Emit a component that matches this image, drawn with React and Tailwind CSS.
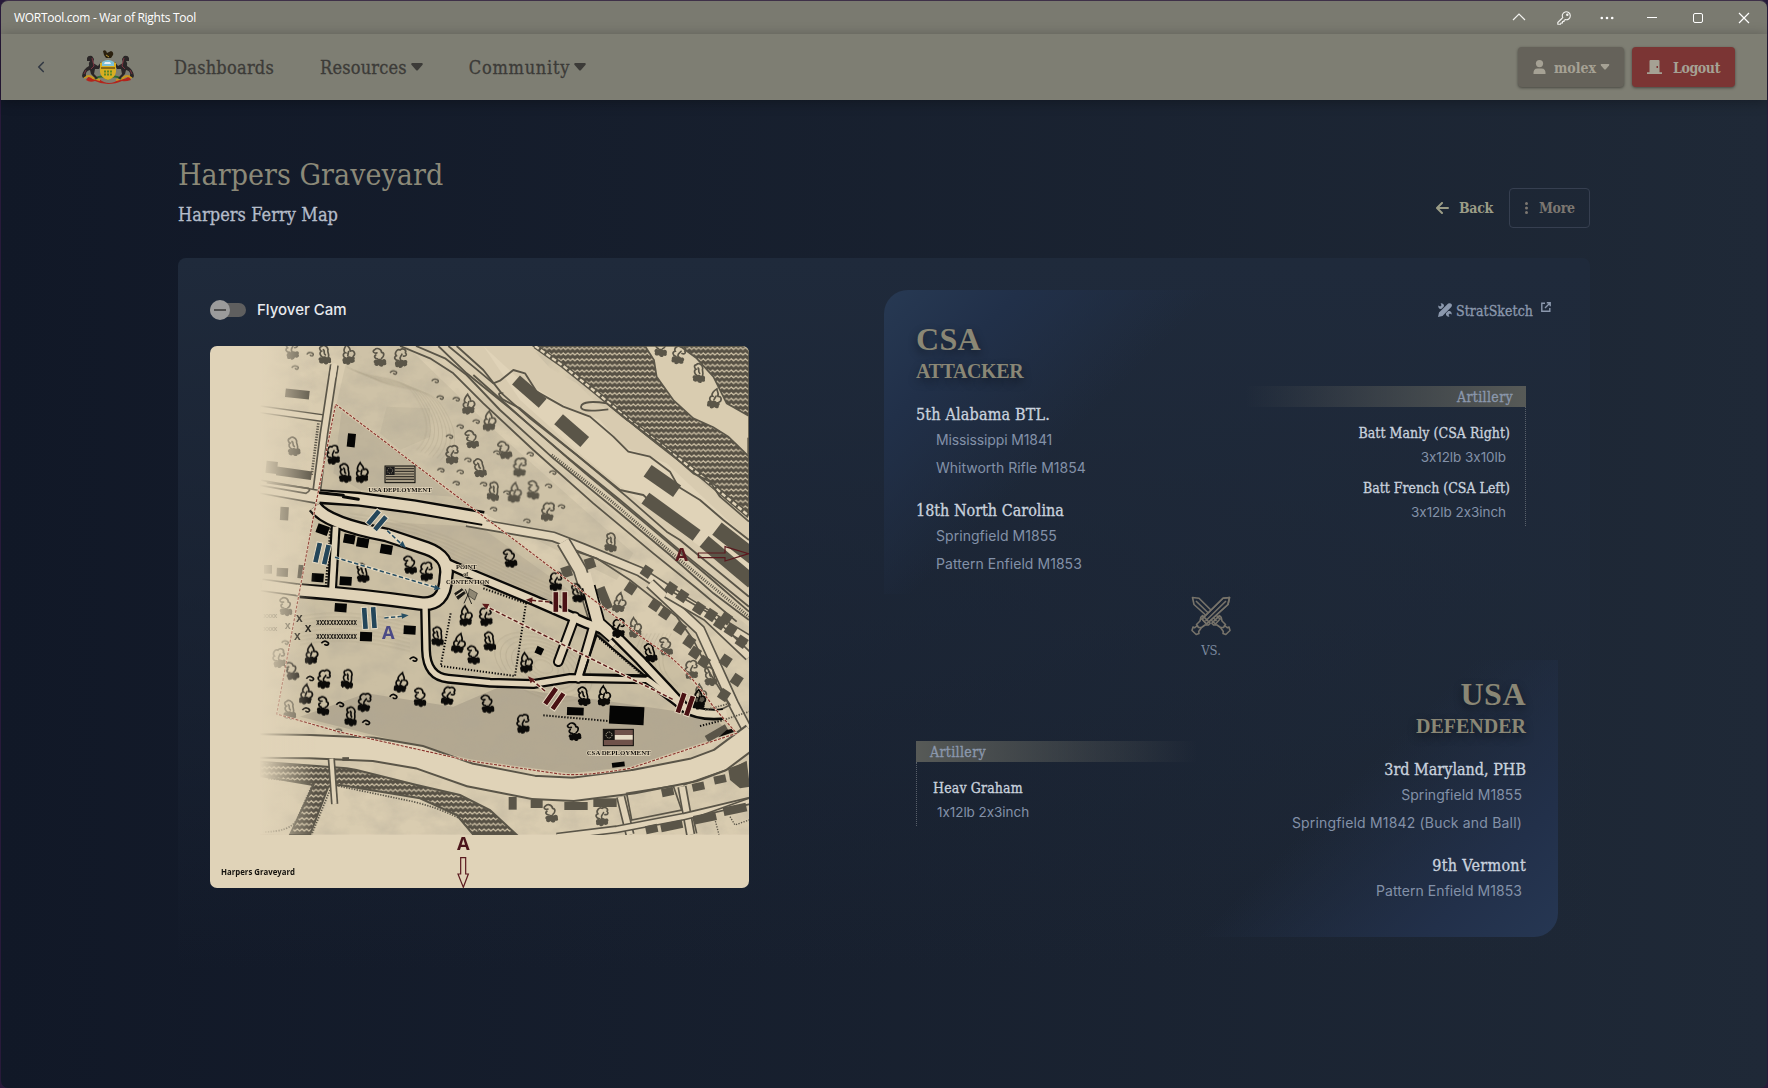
import React from "react";
import { ChevronLeft } from "lucide-react";

const slab = "font-['DejaVu_Serif_Condensed','DejaVu_Serif',serif] [font-stretch:condensed] whitespace-nowrap";
const slabMd = slab + " [-webkit-text-stroke:0.3px_currentColor]";
const sans = "font-['Inter',sans-serif] [font-feature-settings:'calt'_0] whitespace-nowrap";
const serif = "font-['Liberation_Serif',serif] font-bold text-[#8a8775] [text-shadow:0_4px_10px_rgba(0,0,0,0.45)]";

const INK = "#0b0a08";
const GREY = "#5a5548";
const PAPER = "#e0d3b8";

/* ---------- map ---------- */

const TREES = [
  "M-8 6C-20 4 -22 -6 -13 -9C-20 -18 -8 -30 0 -25C8 -32 20 -24 15 -15C20 -10 16 -4 8 -6M-2 4C-6 -4 2 -6 4 -12",
  "M-11 8C-17 0 -8 -8 -12 -16C-10 -28 2 -32 7 -26C17 -24 12 -14 8 -12C16 -8 12 2 6 6M-3 0C4 -6 -4 -12 2 -16",
  "M-9 8C-18 4 -16 -8 -8 -8C-16 -14 -6 -26 0 -32C2 -24 12 -18 6 -10C18 -16 24 0 14 6M-2 2L2 -10",
  "M-6 4C-14 0 -18 -12 -8 -14C-8 -26 6 -30 12 -24C22 -20 14 -12 6 -14M10 -8C18 -4 12 4 6 4",
];
const BLOB = "M-19 18C-22 8 -14 4 -8 8C-2 2 4 4 8 7C16 3 21 12 16 16C20 24 8 28 4 23C0 31 -10 30 -10 24C-16 27 -21 23 -19 18Z";

function Tree({ x, y, c = INK, i = 0 }) {
  const flip = i % 2 ? -1 : 1;
  const tilt = ((i * 37) % 24) - 10;
  return (
    <g transform={`translate(${x} ${y}) scale(${flip} 1) rotate(${tilt})`}>
      <path d={TREES[i % 4]} fill="none" stroke={c} strokeWidth="5" strokeLinecap="round" />
      <path d={BLOB} fill={c} />
    </g>
  );
}

function Block({ x, y, w, h, r = 0, c = GREY }) {
  return <rect x={x - w / 2} y={y - h / 2} width={w} height={h} fill={c} transform={`rotate(${r} ${x} ${y})`} />;
}

function Road({ d, w = 34, c = GREY, e = 6 }) {
  return (
    <>
      <path d={d} fill="none" stroke={c} strokeWidth={w + e * 2} strokeLinejoin="round" />
      <path d={d} fill="none" stroke={PAPER} strokeWidth={w} strokeLinejoin="round" />
    </>
  );
}

function Battery({ x, y, r, c, h = 58 }) {
  return (
    <g transform={`translate(${x} ${y}) rotate(${r})`} fill={c} stroke="#e8dcc4" strokeWidth="3">
      <rect x="-22" y={-h / 2} width="17" height={h} />
      <rect x="5" y={-h / 2} width="17" height={h} />
    </g>
  );
}

const GREY_TREES = [
  [277, 30], [373, 45], [445, 45], [538, 52], [603, 55], [280, 320], [805, 195], [815, 298], [757, 345], [838, 385],
  [868, 245], [914, 330], [960, 382], [880, 455], [944, 460], [1000, 450], [1044, 516], [1232, 608], [1258, 790],
  [1382, 22], [1437, 45], [1496, 100], [1544, 178], [257, 800], [238, 955], [268, 1110],
  [1305, 865], [1398, 920], [1475, 990], [1530, 1010], [1500, 1065], [1052, 1420], [1207, 1430],
];
const INK_TREES = [
  [400, 345], [434, 400], [485, 400], [630, 675], [680, 695], [487, 700], [797, 830], [930, 655], [1068, 725], [1132, 760],
  [334, 945], [275, 993], [373, 1018], [442, 1018], [318, 1065], [370, 1098], [494, 1088], [452, 1130], [603, 1030], [660, 1072], [745, 1068],
  [712, 890], [776, 912], [820, 945], [858, 830], [868, 905], [978, 970], [862, 1092], [970, 1152], [1150, 1070], [1212, 1070], [1122, 1175],
  [1256, 865], [1350, 940], [1497, 1080],
];
const TUFTS = [[330, 45], [285, 85], [580, 100], [705, 125], [720, 175], [768, 180], [780, 262], [748, 292], [803, 362], [722, 393], [780, 398], [768, 432], [828, 247], [890, 340], [990, 345], [1058, 400], [850, 435], [920, 460], [1045, 440], [1084, 502], [980, 545], [880, 510], [255, 910], [415, 1175]];

function Wave({ id, bg }) {
  return (
    <pattern id={id} width="28" height="17" patternUnits="userSpaceOnUse">
      <rect width="28" height="17" fill={bg} />
      <path d="M-2 6L5 11L12 5L19 11L26 5L30 8" stroke="#d3c6aa" strokeWidth="3.6" fill="none" />
    </pattern>
  );
}

function BattleMap() {
  return (
    <svg viewBox="30 18 1617 1626" className="block h-[542px] w-[539px] rounded-[7px]" preserveAspectRatio="none">
      <defs>
        <Wave id="wave" bg="#575145" />
        <linearGradient id="fade" x1="0" x2="1" y1="0" y2="0">
          <stop offset="0" stopColor={PAPER} />
          <stop offset="1" stopColor={PAPER} stopOpacity="0" />
        </linearGradient>
        <filter id="mottle" x="0" y="0" width="100%" height="100%">
          <feTurbulence type="fractalNoise" baseFrequency="0.013 0.018" numOctaves="4" seed="8" />
          <feColorMatrix values="0 0 0 0 0.42  0 0 0 0 0.38  0 0 0 0 0.3  1.9 0 0 0 -0.72" />
        </filter>
        <clipPath id="land"><rect x="180" y="18" width="1467" height="1466" /></clipPath>
      </defs>
      <rect x="30" y="18" width="1617" height="1626" fill={PAPER} />
      <g clipPath="url(#land)">
        <rect x="180" y="18" width="1467" height="1466" fill="#d9ccb0" />
        <path d="M450 18L620 18L860 250L1300 640L1250 720L810 500L410 190Z" fill="#cec2a7" />
        <path d="M407 193L1260 840L1410 950L1610 1180L1290 1285L1110 1303L810 1263L230 1122Z" fill="#cbbfa3" />
        <path d="M300 1130L500 1060L760 1100L900 1040L1200 1080L1540 1130L1590 1180L1290 1280L1110 1300L810 1258Z" fill="#b3a891" />
        <path d="M425 215L640 370L760 470L480 450L400 400Z" fill="#bfb49b" />
        <path d="M560 200L690 205L690 290L600 330L540 280Z" fill="#c6bba1" />
        <path d="M420 540L840 560L1120 760L1060 800L760 680Z" fill="#c0b49a" />
        <rect x="180" y="18" width="1467" height="1466" filter="url(#mottle)" opacity="0.36" />
        <g fill="none" stroke="#8d836c" strokeWidth="1.3" opacity="0.4">
          {[0, 1, 2, 3, 4, 5, 6, 7].map((k) => (
            <g key={k}>
              <path d={`M${440 + k * 12} ${80 + k * 5}c60 40 160 20 200 80s60 120 10 170`} />
              <path d={`M450 ${520 + k * 11}q200 20 380 110t260 120`} />
              <ellipse cx="1030" cy="980" rx={30 + k * 18} ry={18 + k * 10} transform="rotate(25 1030 980)" />
              <path d={`M300 ${830 + k * 12}q140 -30 330 20`} />
              <path d={`M${1330 + k * 12} 880q-60 100 20 160`} />
            </g>
          ))}
        </g>

        {/* north-east river and islands */}
        <path d="M1000 18L1647 18L1647 520L1500 400L1300 250L1180 150L1090 80Z" fill="url(#wave)" stroke={GREY} strokeWidth="5" />
        <path d="M1335 18L1440 18L1490 55L1540 110L1580 190L1647 228L1647 350L1585 290L1540 262L1480 235L1420 180L1370 110L1362 60Z" fill="#d9ccb0" stroke={GREY} strokeWidth="5" />
        <path d="M1005 18L1090 78L1180 150L1300 250L1500 405L1647 528" fill="none" stroke={GREY} strokeWidth="15" />
        <path d="M1005 18L1090 78L1180 150L1300 250L1500 405L1647 528" fill="none" stroke={PAPER} strokeWidth="7" strokeDasharray="14 7" />
        <path d="M990 18L1050 85L1130 130L1190 190L1220 205L1290 250L1400 340L1480 400L1540 460L1647 545L1647 860L1500 740L1300 570L1060 360L910 220L700 18Z" fill="#d8cbb0" />
        <path d="M850 18L950 110L1100 200L1200 240L1270 320L1400 370L1647 600L1647 740L1500 620L1300 470L1150 350L960 180Z" fill={PAPER} />
        <g fill="none" stroke={GREY} strokeWidth="5.5" strokeLinejoin="round">
          <path d="M600 18L690 55L760 100L850 190L1000 330L1180 490L1360 640L1490 745L1610 845" />
          <path d="M648 18L735 55L800 105L900 210L1060 355L1230 495L1410 645L1540 760L1647 840" />
          <path d="M715 18L800 100L930 205L1100 350L1260 480L1450 640L1647 800" />
          <path d="M745 18L830 88L880 130L900 122L940 90L975 100L1010 155L1090 200L1170 230L1240 290L1285 335L1350 350L1410 395L1435 440L1500 480L1570 540L1647 600" />
          <path d="M770 18L850 90L905 160L990 235L1130 345L1280 470L1400 575L1440 600L1647 770" />
          <path d="M910 160Q885 155 908 178L960 205L1100 320L1260 450L1330 465L1400 530" />
          <path d="M1225 208Q1130 220 1145 195Q1160 180 1220 190L1290 245L1400 330L1480 400L1530 425L1560 470L1647 545" />
          <path d="M820 105L1000 265L1150 395L1330 545L1520 705L1647 815" />
        </g>
        <path d="M1055 345L1230 480L1440 660L1647 830" fill="none" stroke={GREY} strokeWidth="9" strokeDasharray="3 4" />
        <Block x={988} y={155} w={106} h={36} r={41} />
        <Block x={1115} y={272} w={104} h={40} r={41} />
        <Block x={1387} y={423} w={108} h={42} r={35} />
        <Block x={1413} y={530} w={190} h={40} r={36} />
        <Block x={1610} y={612} w={150} h={46} r={38} />
        <Block x={1585} y={665} w={190} h={42} r={40} />
        <Block x={1652} y={318} w={20} h={50} />

        {/* outlying streets */}
        <Road d="M180 208L380 236" w={16} e={4} />
        <Road d="M403 75L372 280L348 470" w={17} e={5} />
        <path d="M403 78L398 110" stroke={PAPER} strokeWidth="17" strokeLinecap="round" />
        <Road d="M180 440L350 470" w={34} e={5} />
        <path d="M180 436L318 460Q335 450 325 445L200 428" fill="none" stroke={GREY} strokeWidth="5" />
        <Road d="M185 735L310 752" w={30} e={5} />
        <Road d="M800 545L1060 590L1150 625L1320 695L1450 780L1647 900" w={22} e={5} />
        <Road d="M1090 605L1140 690L1190 850L1250 910" w={34} e={5} />
        <Road d="M1350 730L1500 870L1600 1090L1647 1180" w={24} e={5} />
        <Road d="M1400 760L1520 830L1647 950" w={20} e={5} />
        <path d="M1130 635L1190 655L1290 720L1430 830L1480 900L1530 1000L1590 1095L1560 1110" fill="none" stroke={GREY} strokeWidth="5" />
        {[[1100, 695], [1170, 670], [1340, 695], [1292, 745], [1413, 745], [1447, 768], [1365, 795], [1395, 820], [1497, 805], [1533, 825], [1578, 835], [1440, 865], [1468, 905], [1485, 938], [1512, 965], [1577, 962], [1610, 1020], [1572, 1065], [1560, 850], [1592, 870], [1625, 905]].map(([x, y], k) => (
          <Block key={k} x={x} y={y} w={30} h={32} r={k < 2 ? -18 : 34} />
        ))}
        <Block x={1213} y={775} w={28} h={68} r={-22} />
        <Block x={1550} y={1180} w={70} h={22} r={-30} />

        {/* south road */}
        <path d="M180 1218L330 1220L520 1228L660 1252L810 1305L1000 1342L1120 1348L1300 1325L1480 1290L1560 1260L1660 1185" fill="none" stroke={GREY} strokeWidth="76" />
        <path d="M180 1218L330 1220L520 1228L660 1252L810 1305L1000 1342L1120 1348L1300 1325L1480 1290L1560 1260L1660 1185" fill="none" stroke={PAPER} strokeWidth="64" />
        <path d="M180 1265L440 1285L470 1290L650 1335L780 1365L870 1410L950 1484L820 1484L770 1425L660 1375L420 1335L385 1340L330 1484L270 1484L340 1335L180 1308Z" fill="url(#wave)" stroke={GREY} strokeWidth="6" />
        <path d="M205 1316L340 1328L290 1440Q270 1475 190 1476M415 1338L640 1385Q780 1420 850 1484M390 1350L335 1484" fill="none" stroke={GREY} strokeWidth="5" strokeDasharray="4 4" />
        <Road d="M394 1256L404 1392" w={12} e={5} />
        <Block x={437} y={1257} w={20} h={11} />
        <Road d="M1262 1370L1290 1484M1446 1340L1472 1484" w={18} e={5} />
        <Road d="M1070 1490L1250 1468L1450 1430L1660 1380" w={14} e={5} />
        <path d="M1280 1360L1420 1338L1445 1410L1295 1440ZM1450 1335L1640 1268M1490 1480L1480 1435L1647 1375" fill="none" stroke={GREY} strokeWidth="5" />
        {[[938, 1390, 24, 38], [1010, 1392, 36, 24], [1128, 1398, 70, 24], [1215, 1388, 70, 26], [1403, 1356, 36, 24], [1495, 1340, 36, 24], [1560, 1318, 36, 24], [1355, 1467, 36, 24], [1415, 1458, 66, 24], [1515, 1434, 68, 26], [1605, 1408, 70, 26]].map(([x, y, w, h], k) => (
          <Block key={k} x={x} y={y} w={w} h={h} r={k > 3 ? -12 : 0} />
        ))}
        <path d="M1585 1290L1640 1262L1650 1340L1620 1345L1590 1320Z" fill={GREY} />
        <path d="M1540 1420L1557 1484M1590 1430L1605 1455L1647 1440" fill="none" stroke={GREY} strokeWidth="4" strokeDasharray="4 4" />

        {/* west buildings */}
        <Block x={292} y={162} w={72} h={26} r={6} />
        <Block x={282} y={400} w={106} h={26} r={8} />
        <Block x={215} y={382} w={34} h={36} r={6} />
        <Block x={253} y={521} w={25} h={40} r={3} />
        <Block x={204} y={688} w={24} h={26} />
        <Block x={247} y={697} w={34} h={26} r={3} />
        <Block x={302} y={695} w={16} h={40} r={6} />
        <path d="M355 250L335 405" stroke={GREY} strokeWidth="8" strokeDasharray="4 4" />

        {/* central roads */}
        <g strokeLinejoin="round">
          <path d="M345 500Q380 550 560 585L680 625Q750 650 738 710Q735 800 660 790Q480 765 300 752" fill="none" stroke={INK} strokeWidth="45" />
          <path d="M360 470L480 478L640 500L850 535" fill="none" stroke={INK} strokeWidth="45" />
          <path d="M407 560L396 750" fill="none" stroke={INK} strokeWidth="30" />
          <path d="M740 670L820 705L1000 780L1160 850L1240 880L1320 960L1400 1045L1450 1100Q1500 1130 1570 1122" fill="none" stroke={INK} strokeWidth="35" />
          <path d="M675 790L678 930Q680 1010 745 1016L870 1028L1000 1032L1110 1014L1340 1018Q1400 1060 1450 1100" fill="none" stroke={INK} strokeWidth="30" />
          <path d="M1125 830L1075 965M1180 860L1135 1015" fill="none" stroke={INK} strokeWidth="32" strokeLinecap="round" />
          <path d="M1165 740L1195 850L1240 890" fill="none" stroke={INK} strokeWidth="44" />

          <path d="M345 500Q380 550 560 585L680 625Q750 650 738 710Q735 800 660 790Q480 765 290 750" fill="none" stroke={PAPER} strokeWidth="31" />
          <path d="M346 468L480 478L640 500L860 538" fill="none" stroke={PAPER} strokeWidth="31" />
          <path d="M407 560L396 750" fill="none" stroke={PAPER} strokeWidth="17" />
          <path d="M740 670L820 705L1000 780L1160 850L1240 880L1320 960L1400 1045L1450 1100Q1500 1130 1580 1120" fill="none" stroke={PAPER} strokeWidth="21" />
          <path d="M675 790L678 930Q680 1010 745 1016L870 1028L1000 1032L1110 1014L1340 1018Q1400 1060 1450 1100" fill="none" stroke={PAPER} strokeWidth="16" />
          <path d="M1125 830L1075 965M1180 860L1135 1015" fill="none" stroke={PAPER} strokeWidth="20" strokeLinecap="round" />
          <path d="M1155 700L1195 850L1240 890" fill="none" stroke={PAPER} strokeWidth="33" />
          <path d="M360 458L430 466M430 470L475 478" fill="none" stroke={INK} strokeWidth="9" strokeLinecap="round" />
        </g>
        <path d="M1190 885L1338 1010L1150 1004Z" fill="none" stroke={INK} strokeWidth="6" strokeLinejoin="round" />
        <path d="M1198 895L1325 1003" fill="none" stroke={INK} strokeWidth="6" strokeDasharray="4 4" />
        <g fill="none" stroke={INK} strokeWidth="6" strokeDasharray="4 5">
          <path d="M752 820L722 978L945 1008L978 790L850 745" />
          <path d="M1030 1126L1225 1143M1500 1158L1570 1140" />
          <path d="M392 565L378 740" strokeWidth="8" />
        </g>
        <path d="M1515 1110L1590 1090M1570 1140L1647 1115" fill="none" stroke={GREY} strokeWidth="5" strokeDasharray="4 4" />

        {[[454, 301, 24, 40, 6], [368, 569, 36, 28, 20], [448, 597, 34, 28, 10], [488, 608, 36, 28, 10], [559, 628, 36, 28, 10], [353, 713, 36, 26, 4], [437, 723, 36, 26, 4], [422, 803, 36, 26, 4], [498, 890, 36, 28, 2], [629, 870, 36, 26, 3], [1018, 932, 22, 22, 25], [1126, 1114, 50, 24, 2], [1280, 1126, 104, 54, 3], [1255, 1274, 38, 14, -7]].map(([x, y, w, h, r], k) => (
          <Block key={k} x={x} y={y} w={w} h={h} r={r} c="#050504" />
        ))}
        <path d="M1555 1192L1580 1170L1598 1166L1602 1176Z" fill={INK} />
        {GREY_TREES.map(([x, y], k) => <Tree key={k} x={x} y={y} i={k} c={GREY} />)}
        {TUFTS.map(([x, y], k) => <path key={k} d={`M${x - 10} ${y - 2}q6 -8 14 -5q10 3 4 9q-6 2 -8 -3`} fill="none" stroke={GREY} strokeWidth="4" />)}
        {INK_TREES.map(([x, y], k) => <Tree key={k} x={x} y={y} i={k} />)}
        {[[375, 912], [640, 960], [330, 1018], [420, 1096], [580, 1072], [318, 1112], [498, 1150]].map(([x, y], k) => <path key={k} d={`M${x - 11} ${y - 2}q8 -10 16 -5q10 5 3 10q-8 2 -9 -3`} fill="none" stroke={INK} strokeWidth="5" />)}
        <g fontFamily="Liberation Sans" fontWeight="700" fill={INK}>
          <text x="349" y="856" fontSize="28" textLength="122" lengthAdjust="spacingAndGlyphs">xxxxxxxxxxxx</text>
          <text x="349" y="897" fontSize="28" textLength="122" lengthAdjust="spacingAndGlyphs">xxxxxxxxxxxx</text>
          <text x="288" y="845" fontSize="36">x</text>
          <text x="314" y="876" fontSize="36">x</text>
          <text x="282" y="899" fontSize="36">x</text>
          <text x="254" y="868" fontSize="32" fill={GREY}>x</text>
          <text x="190" y="834" fontSize="22" fill={GREY} textLength="42">xxxx</text>
          <text x="190" y="872" fontSize="22" fill={GREY} textLength="42">xxxx</text>
        </g>
        <path d="M407 193L1260 840L1330 895L1410 950Q1470 1000 1540 1100L1610 1180L1290 1285Q1150 1310 1080 1302L810 1263L415 1175L230 1122L290 800L348 490Z" fill="none" stroke="#e5d6bc" strokeWidth="5" />
        <path d="M407 193L1260 840L1330 895L1410 950Q1470 1000 1540 1100L1610 1180L1290 1285Q1150 1310 1080 1302L810 1263L415 1175L230 1122L290 800L348 490Z" fill="none" stroke="#8a352e" strokeWidth="3.4" strokeDasharray="9 4" />
        <rect x="178" y="18" width="170" height="1466" fill="url(#fade)" />
      </g>

      {/* troop movements */}
      <g fill="none" strokeWidth="4.500" strokeDasharray="13 7">
        <path d="M562 572L608 616M405 652L712 744M553 834L612 828" stroke="#e5d9c0" strokeWidth="9" strokeDasharray="none" />
        <path d="M562 572L608 616M405 652L712 744M553 834L612 828" stroke="#274e63" />
        <path d="M1048 786L985 780M1418 1078L850 795M1035 1053L990 1015" stroke="#e5d9c0" strokeWidth="9" strokeDasharray="none" />
        <path d="M1048 786L985 780M1418 1078L850 795M1035 1053L990 1015" stroke="#5e1c1c" />
      </g>
      <path d="M618 625L598 615L608 603ZM722 747L702 750L706 734ZM626 826L606 836L604 820Z" fill="#274e63" />
      <path d="M978 779L998 772L996 790ZM846 791L868 792L860 808ZM984 1009L1004 1018L992 1030Z" fill="#5e1c1c" />
      <Battery x={531} y={541} r={40} c="#24465a" h={54} />
      <Battery x={366} y={641} r={13} c="#24465a" h={62} />
      <Battery x={508} y={834} r={-4} c="#24465a" h={66} />
      <Battery x={1081} y={786} r={0} c="#4a1114" h={62} />
      <Battery x={1063} y={1076} r={35} c="#4a1114" h={60} />
      <Battery x={1456} y={1093} r={19} c="#4a1114" h={64} />

      {/* deployment flags */}
      <rect x="555" y="378" width="90" height="50" fill="#a89d85" stroke={INK} strokeWidth="3" />
      <path d="M584 386H642M584 394H642M584 402H642M558 410H642M558 418H642" stroke="#3a362e" strokeWidth="3.6" />
      <rect x="557" y="380" width="27" height="25" fill="#1c1b1b" />
      <circle cx="570" cy="392" r="8" fill="none" stroke="#8d8674" strokeWidth="3" strokeDasharray="3 3" />
      <rect x="1210" y="1168" width="90" height="49" fill="#6f524a" stroke={INK} strokeWidth="3" />
      <rect x="1243" y="1185" width="55" height="14" fill="#e6dcc6" />
      <rect x="1212" y="1170" width="32" height="30" fill="#15130f" />
      <circle cx="1227" cy="1185" r="9" fill="none" stroke="#d8ccb2" strokeWidth="3" strokeDasharray="3 3" />
      <g stroke={INK} strokeWidth="2.500">
        <path d="M796 748L815 792M806 760L792 790" />
        <path d="M764 760L786 746L796 760L774 778Z" fill="#1a1814" stroke="#1a1814" />
        <path d="M768 768L791 752" stroke="#d8ccb2" strokeWidth="4" />
        <path d="M808 746L832 760L824 780L804 766Z" fill="#8f8773" strokeWidth="1.500" />
      </g>
      <g fontFamily="Liberation Serif" fontWeight="700" fill="#16130e" stroke="#e0d3b8" strokeWidth="4" paintOrder="stroke" fontSize="19">
        <text x="505" y="455" textLength="190" lengthAdjust="spacingAndGlyphs">USA DEPLOYMENT</text>
        <text x="1160" y="1244" textLength="192" lengthAdjust="spacingAndGlyphs">CSA DEPLOYMENT</text>
        <text x="768" y="688" textLength="62" lengthAdjust="spacingAndGlyphs">POINT</text>
        <text x="790" y="709" fontSize="17">of</text>
        <text x="738" y="732" textLength="130" lengthAdjust="spacingAndGlyphs">CONTENTION</text>
      </g>

      {/* artillery arrows */}
      <g fill="none" stroke="#5b1a1f" strokeWidth="3.6">
        <path d="M1495 639H1575V620L1646 641L1575 663V653H1495Z" />
        <path d="M782 1553H797V1602H805L790 1642L774 1602H782Z" />
      </g>
      <g fontFamily="Open Sans" fontWeight="700">
        <text x="1426" y="664" fontSize="54" fill="#5b1a1f" textLength="38" lengthAdjust="spacingAndGlyphs">A</text>
        <text x="771" y="1529" fontSize="54" fill="#4b151b" textLength="38" lengthAdjust="spacingAndGlyphs">A</text>
        <text x="546" y="896" fontSize="54" fill="#4b4a86" textLength="38" lengthAdjust="spacingAndGlyphs">A</text>
        <text x="63" y="1606" fontSize="25" fill="#14120e" textLength="222" lengthAdjust="spacingAndGlyphs">Harpers Graveyard</text>
      </g>
    </svg>
  );
}

/* ---------- icons ---------- */

const Caret = ({ className }) => (
  <svg viewBox="0 0 12 8" className={className} fill="currentColor"><path d="M1 0H11Q12.4 .6 11.4 2L7 7Q6 8 5 7L.6 2Q-.4 .6 1 0Z" /></svg>
);

function Crest() {
  return (
    <svg viewBox="0 0 54 34" className="h-[34px] w-[54px]">
      <path d="M8 26Q12 30 18 29Q23 33 28 33Q34 33 38 29Q44 30 48 26L50 30Q44 32 41 31Q35 34 27 34Q20 34 14 31Q9 33 5 30Z" fill="#b3241c" />
      <path d="M3 28Q8 24 12 28L19 30M51 28Q46 24 42 28L35 30" stroke="#c9961f" strokeWidth="2" fill="none" />
      <path d="M14 29Q20 24 27 29Q34 24 40 29" stroke="#2f6b32" strokeWidth="2" fill="none" />
      {[0, 1].map((k) => (
        <g key={k} transform={k ? "matrix(-1 0 0 1 54 0)" : undefined}>
          <path d="M6 8Q7 5 11 6L13 9L12 13L17 16L20 12L21 13L18 19L14 19L13 24L17 28L15 29L10 24L9 20Q4 21 5 26L2 28L1 26Q2 19 8 16Q7 13 9 11L6 11Z" fill="#2a2627" />
          <path d="M11 8L13 16L10 19M5 20L3 24" stroke="#7a3440" strokeWidth="1" fill="none" />
        </g>
      ))}
      <path d="M19 13Q27 8 35 13V22Q34 28 27 30Q20 28 19 22Z" fill="#d9ae22" />
      <path d="M21 12Q27 8 33 12V16H21Z" fill="#7cc0d8" />
      <path d="M24 12H29L30 14H23Z" fill="#e9eef0" />
      <path d="M20 17H34V19H20Z" fill="#8a6a14" />
      <path d="M23 21.500H31M23 24.500H31" stroke="#5b8a26" strokeWidth="1.8" strokeDasharray="2 1" />
      <path d="M22 1Q25 -1 26 3L30 1Q33 2 32 5L30 8L25 8L23 5Z" fill="#2b2110" />
      <path d="M25 5L28 7" stroke="#b9952f" strokeWidth="1" />
    </svg>
  );
}

function Swords() {
  const sword = "M1.5 1.5L8 2.2L29 23L24.5 28L3 8.5ZM5 5L25.5 25M22.5 29L20.8 27.3L28.4 19.6L30.2 21.3L31 25L34.5 28.5L32.5 31.5L29.5 31.5L26 29ZM33 29L36.5 31.8L38 31L39 34.5L34.8 38.5L32 37.5L32.3 35.5L29.5 31.5";
  return (
    <svg viewBox="0 0 40 40" className="h-10 w-10" fill="none" stroke="#77736a" strokeWidth="1.6" strokeLinejoin="round">
      <path d={sword} />
      <g transform="matrix(-1 0 0 1 40 0)">
        <path d="M1.5 1.5L8 2.2L29 23L24.5 28L3 8.5Z" fill="#1d2635" />
        <path d={sword} />
      </g>
    </svg>
  );
}

function Button({ className, children }) {
  return <button className={`${slab} flex h-10 items-center rounded-[4px] text-[14px] leading-none ${className}`}>{children}</button>;
}

function TitleBar() {
  return (
    <div className="flex h-[34px] items-center justify-between rounded-t-[7px] border-t border-[#3e3048] bg-[#7a7a70] pl-[13px] pr-[17px] text-white">
      <span className="font-['Open_Sans',sans-serif] text-[12px] leading-none tracking-[-0.28px]">WORTool.com - War of Rights Tool</span>
      <div className="flex items-center">
        <svg className="mr-[31px] h-3 w-3.5" viewBox="0 0 14 12" fill="none" stroke="#f1f1ee" strokeWidth="1.2"><path d="M1 8L7 2L13 8" /></svg>
        <svg className="mr-[29px] h-3.5 w-3.5" viewBox="0 0 14 14" fill="none" stroke="#f1f1ee" strokeWidth="1.1" strokeLinejoin="round"><path d="M6 7A4 4 0 1 1 8.2 8.6L7 9.5V10.5H5.5V12H4L3.5 13.3H.8V11.5L5.4 7" /><circle cx="10.3" cy="3.7" r=".7" fill="#f1f1ee" /></svg>
        <svg className="mr-[33px] h-1 w-3.5" viewBox="0 0 14 4" fill="#fff"><circle cx="1.8" cy="2" r="1.3" /><circle cx="7" cy="2" r="1.3" /><circle cx="12.2" cy="2" r="1.3" /></svg>
        <span className="mr-[36px] h-px w-2.5 bg-white" />
        <span className="mr-[35px] size-2.5 rounded-[2px] border border-white" />
        <svg className="h-3 w-3" viewBox="0 0 12 12" fill="none" stroke="#fff" strokeWidth="1.2"><path d="M1 1L11 11M11 1L1 11" /></svg>
      </div>
    </div>
  );
}

function NavBar() {
  return (
    <nav className="flex h-[66px] items-center bg-[#7e7e73] pr-[32px] pl-[31px] text-[#3c3b38] shadow-[0_2px_12px_rgba(0,0,0,0.3)]">
      <ChevronLeft className="mr-[31px] size-[18px] text-[#333a44]" strokeWidth={2.2} />
      <Crest />
      <span className={`${slabMd} ml-[39px] text-[18px] tracking-[0.25px]`}>Dashboards</span>
      <span className={`${slabMd} ml-[46px] flex items-center text-[18px] tracking-[0.2px]`}>Resources<Caret className="ml-[4px] h-2 w-3" /></span>
      <span className={`${slabMd} ml-[46px] flex items-center text-[18px] tracking-[0.75px]`}>Community<Caret className="ml-[4px] h-2 w-3" /></span>
      <div className="ml-auto flex gap-2 font-bold text-[#a5a194]">
        <Button className="w-[106px] bg-[#65625a] pl-[15px] font-bold shadow-[0_1px_3px_rgba(0,0,0,0.45)]">
          <svg viewBox="0 0 13 14" className="mr-[8px] h-3.5 w-[13px]" fill="currentColor"><circle cx="6.5" cy="3.6" r="3.6" /><path d="M.5 14Q0 8.4 4.5 8.4H8.5Q13 8.4 12.5 14Z" /></svg>
          <span className="pt-0.5">molex</span><Caret className="ml-[4px] h-1.5 w-2.5" />
        </Button>
        <Button className="w-[103px] bg-[#7b3534] pl-[15px] font-bold tracking-[-0.4px] shadow-[0_1px_3px_rgba(0,0,0,0.45)]">
          <svg viewBox="0 0 15 14" className="mr-[11px] h-3.5 w-[15px]" fill="currentColor"><path d="M2.5 1Q2.5 0 3.5 0H11.5Q12.5 0 12.5 1V12.3H15V14H0V12.3H2.5ZM9.5 6V8H11V6Z" fillRule="evenodd" /></svg>
          <span className="pt-0.5">Logout</span>
        </Button>
      </div>
    </nav>
  );
}

function Unit({ name, nameClass = "", arms, right, first }) {
  return (
    <div className={right ? "text-right" : ""}>
      <div className={`${slabMd} h-6 pt-px text-[16px] leading-6 text-[#c9d2de] ${first ? "" : "mt-4"} ${nameClass}`}>{name}</div>
      {arms.map(([a, c]) => (
        <div key={a} className={`${sans} text-[14px] leading-7 text-[#8391a8] ${right ? "pr-1" : "pl-5"} ${c}`}>{a}</div>
      ))}
    </div>
  );
}

function Artillery({ right, guns, className }) {
  return (
    <div className={`w-[281px] ${className} ${right ? "text-right" : ""}`}>
      <div className={`${slabMd} h-[21px] text-[14px] leading-[22px] tracking-[0.35px] text-[#8b98ad] ${right ? "bg-gradient-to-l pr-[13px]" : "bg-gradient-to-r pl-[14px]"} from-[#575a57] to-transparent`}>Artillery</div>
      <div className={`flex flex-col gap-[11px] border-dotted border-[#59606a] pt-4 pb-[4px] ${right ? "border-r pr-[15px]" : "border-l pl-4"}`}>
        {guns.map(([n, g, c]) => (
          <div key={n}>
            <div className={`${slabMd} text-[14px] leading-5 text-[#c9d2de] ${c}`}>{n}</div>
            <div className={`${sans} mt-1 text-[13.5px] leading-5 tracking-[-0.05px] text-[#8391a8] ${right ? "pr-1" : "pl-1"}`}>{g}</div>
          </div>
        ))}
      </div>
    </div>
  );
}

function Matchup() {
  return (
    <section className="flex h-[647px] w-[674px] flex-col rounded-tl-[24px] rounded-br-[24px]">
      <div className="flex h-[304px] justify-between rounded-tl-[24px] bg-[linear-gradient(135deg,#273953_0%,#213049_14%,#1f2a3c00_34%)] pl-8">
        <div className="pt-[29px]">
          <h2 className={`${serif} text-[32px] leading-10 tracking-[0.3px]`}>CSA</h2>
          <h3 className={`${serif} mb-[19px] text-[20px] leading-6 tracking-[-0.4px]`}>ATTACKER</h3>
          <Unit first name="5th Alabama BTL." nameClass="tracking-[0.17px]" arms={[["Mississippi M1841", "tracking-[-0.13px]"], ["Whitworth Rifle M1854", ""]]} />
          <Unit name="18th North Carolina" arms={[["Springfield M1855", "tracking-[0.05px]"], ["Pattern Enfield M1853", "tracking-[0.05px]"]]} />
        </div>
        <div className="flex flex-col items-end pt-[10px]">
          <a className={`${slabMd} flex items-center pr-[7px] text-[14px] leading-5 tracking-[0.07px] text-[#8b98ad]`}>
            <svg viewBox="0 0 14 14" className="mr-1 size-3.5" fill="currentColor"><path d="M0 14L1 9.5L10.2 .6Q12 -.5 13.5 1Q14.5 2.5 13.3 3.9L4.5 12.9ZM.3 2.6L2.2 3.5L3.5 2.2L2.6 .3Q5 0 6 2L5.8 3.6L3.6 5.8L2 6Q0 5 .3 2.6ZM10.3 8L12 8Q14 9 13.7 11.4L11.8 10.5L10.5 11.8L11.4 13.7Q9 14 8 12L8 10.3Z" /></svg>
            <span className="pt-0.5 leading-[18px]">StratSketch</span>
            <svg viewBox="0 0 10 10" className="mb-1.5 ml-2 size-2.5" fill="none" stroke="currentColor" strokeWidth="1.4"><path d="M4 1.2H.8V9.2H8.8V6M5.8 .8H9.2V4.2M9 1L4 6" /></svg>
          </a>
          <Artillery right className="mt-[66px] mr-8" guns={[["Batt Manly (CSA Right)", "3x12lb 3x10lb", "tracking-[0.05px]"], ["Batt French (CSA Left)", "3x12lb 2x3inch", ""]]} />
        </div>
      </div>
      <div className="flex h-[66px] flex-col items-center pr-[20px] pt-0.5">
        <Swords />
        <span className={`${slab} mt-[7px] text-[13px] leading-4 text-[#7b899f]`}>VS.</span>
      </div>
      <div className="flex h-[277px] justify-between rounded-br-[24px] bg-[linear-gradient(315deg,#263753_0%,#22304a_14%,#1f2a3c00_38%)] px-8">
        <Artillery className="mt-[81px]" guns={[["Heav Graham", "1x12lb 2x3inch", "tracking-[0.15px]"]]} />
        <div className="pt-[14px] text-right">
          <h2 className={`${serif} text-[32px] leading-10 tracking-[0.5px]`}>USA</h2>
          <h3 className={`${serif} mb-[19px] text-[20px] leading-6`}>DEFENDER</h3>
          <Unit first right name="3rd Maryland, PHB" arms={[["Springfield M1855", "tracking-[0.05px]"], ["Springfield M1842 (Buck and Ball)", "tracking-[0.18px]"]]} />
          <Unit right name="9th Vermont" nameClass="tracking-[0.3px]" arms={[["Pattern Enfield M1853", "tracking-[0.05px]"]]} />
        </div>
      </div>
    </section>
  );
}

export default function App() {
  return (
    <div className="h-[1088px] w-[1768px] overflow-hidden bg-[#281a3a] px-px">
      <div className="h-full rounded-[7px] bg-gradient-to-r from-[#111827] to-[#1f2937]">
        <TitleBar />
        <NavBar />
        <main className="ml-[177px] w-[1412px] pt-[54px]">
          <header className="flex h-[74px] items-end justify-between">
            <div>
              <h1 className={`${slab} text-[30px] leading-9 tracking-[0.05px] text-[#8b8978]`}>Harpers Graveyard</h1>
              <p className={`${slabMd} mt-[10px] mb-px text-[18px] leading-6 tracking-[0.07px] text-[#b4bcc9]`}>Harpers Ferry Map</p>
            </div>
            <div className="flex">
              <Button className="w-[73px] font-bold tracking-[-0.3px] text-[#9b9c86]">
                <svg viewBox="0 0 13 12" className="mr-[10px] h-3 w-[13px]" fill="none" stroke="currentColor" strokeWidth="2" strokeLinecap="round" strokeLinejoin="round"><path d="M6 1L1 6L6 11M1.5 6H12" /></svg>
                Back
              </Button>
              <Button className="w-[81px] border border-[#363f50] pl-[15px] font-bold tracking-[-0.35px] text-[#7c7771]">
                <svg viewBox="0 0 3 12" className="mr-[11px] h-3 w-[3px]" fill="currentColor"><circle cx="1.5" cy="1.5" r="1.5" /><circle cx="1.5" cy="6" r="1.5" /><circle cx="1.5" cy="10.5" r="1.5" /></svg>
                More
              </Button>
            </div>
          </header>
          <div className="mt-[30px] flex h-[712px] justify-between rounded-[8px] bg-gradient-to-b from-[#1f2a3b] to-transparent p-8">
            <div>
              <label className="flex h-10 items-center">
                <span className="flex h-3.5 w-[36px] items-center rounded-full bg-[#5f5f5f]">
                  <span className="flex size-5 shrink-0 items-center justify-center rounded-full bg-[#9b9b9b]"><span className="h-[2px] w-3 bg-[#4f4f4f]" /></span>
                </span>
                <span className={`${sans} ml-[11px] text-[15px] font-medium text-[#e8eaee]`}>Flyover Cam</span>
              </label>
              <div className="mt-4"><BattleMap /></div>
            </div>
            <Matchup />
          </div>
        </main>
      </div>
    </div>
  );
}
